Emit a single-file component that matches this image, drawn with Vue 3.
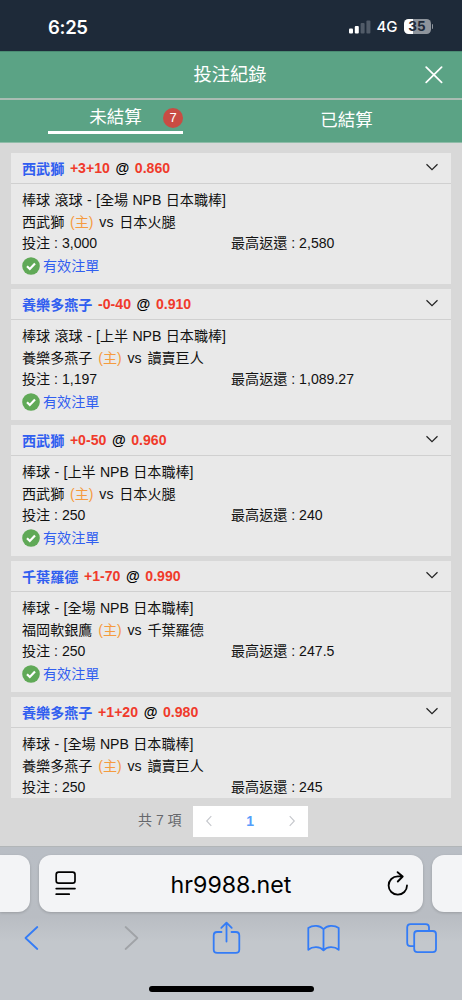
<script setup>
import { ref } from 'vue'

// tabs
const activeTab = ref('open')
const total = 7

// bets
const bets = [
  { pick: '西武獅', line: '+3+10', odds: '0.860', type: '棒球 滾球', scope: '全場', home: '西武獅', away: '日本火腿', stake: '3,000', payout: '2,580', status: '有效注單' },
  { pick: '養樂多燕子', line: '-0-40', odds: '0.910', type: '棒球 滾球', scope: '上半', home: '養樂多燕子', away: '讀賣巨人', stake: '1,197', payout: '1,089.27', status: '有效注單' },
  { pick: '西武獅', line: '+0-50', odds: '0.960', type: '棒球', scope: '上半', home: '西武獅', away: '日本火腿', stake: '250', payout: '240', status: '有效注單' },
  { pick: '千葉羅德', line: '+1-70', odds: '0.990', type: '棒球', scope: '全場', home: '福岡軟銀鷹', away: '千葉羅德', stake: '250', payout: '247.5', status: '有效注單' },
  { pick: '養樂多燕子', line: '+1+20', odds: '0.980', type: '棒球', scope: '全場', home: '養樂多燕子', away: '讀賣巨人', stake: '250', payout: '245' },
]
</script>

<template>
  <div class="phone">
    <!-- status bar -->
    <div class="status">
      <span class="clock">6:25</span>
      <div class="status-right">
        <svg class="signal" width="22" height="14" viewBox="0 0 22 14">
          <rect x="0" y="8.5" width="4" height="5" rx="1" fill="#fff" />
          <rect x="5.8" y="6" width="4" height="7.5" rx="1" fill="#fff" />
          <rect x="11.6" y="3" width="4" height="10.5" rx="1" fill="#515b68" />
          <rect x="17.4" y="0.5" width="4" height="13" rx="1" fill="#515b68" />
        </svg>
        <span class="network">4G</span>
        <div class="battery"><span>35</span></div>
        <i class="battery-tip"></i>
      </div>
    </div>

    <!-- header -->
    <div class="header">
      <span class="side"></span>
      <h1>投注紀錄</h1>
      <span class="side">
        <svg width="18" height="18" viewBox="0 0 18 18"><path d="M1.2 1.2 16.6 16.4M16.6 1.2 1.2 16.4" fill="none" stroke="#fff" stroke-width="1.7" stroke-linecap="round" /></svg>
      </span>
    </div>
    <div class="tabs">
      <div class="tab" :class="{ active: activeTab === 'open' }" @click="activeTab = 'open'">
        <span class="tab-inner">未結算<b class="badge">{{ total }}</b></span>
      </div>
      <div class="tab" :class="{ active: activeTab === 'settled' }" @click="activeTab = 'settled'">
        <span class="tab-inner">已結算</span>
      </div>
    </div>

    <!-- bet list -->
    <div class="list">
      <div class="card" v-for="(bet, i) in bets" :key="i">
        <div class="card-head">
          <span class="pick">{{ bet.pick }}</span>
          <span class="red">{{ bet.line }}</span>
          <span class="at">@</span>
          <span class="red">{{ bet.odds }}</span>
          <svg class="arrow" width="14" height="8" viewBox="0 0 14 8"><path d="M1.5 1.2 7 6.6 12.5 1.2" fill="none" stroke="#222" stroke-width="1.2" /></svg>
        </div>
        <div class="card-body">
          <p class="league">{{ bet.type }} - [{{ bet.scope }} NPB 日本職棒]</p>
          <p class="match"><span>{{ bet.home }}</span><span class="home">(主)</span><span>vs</span><span>{{ bet.away }}</span></p>
          <p class="money"><span>投注 : {{ bet.stake }}</span><span>最高返還 : {{ bet.payout }}</span></p>
          <p class="valid" v-if="bet.status">
            <svg width="18" height="18" viewBox="0 0 18 18">
              <circle cx="9" cy="9" r="8.8" fill="#60a957" />
              <path d="M5 9.3 7.8 12 13 6.5" fill="none" stroke="#fff" stroke-width="2.2" />
            </svg>
            {{ bet.status }}
          </p>
        </div>
      </div>
    </div>

    <!-- pagination -->
    <div class="pagination">
      <span class="total">共 {{ total }} 項</span>
      <div class="pager">
        <svg width="8" height="12" viewBox="0 0 8 12"><path d="M6.3 1.2 1.7 6l4.6 4.8" fill="none" stroke="#c5c7cc" stroke-width="1.1" /></svg>
        <b>1</b>
        <svg width="8" height="12" viewBox="0 0 8 12"><path d="M1.7 1.2 6.3 6l-4.6 4.8" fill="none" stroke="#c5c7cc" stroke-width="1.1" /></svg>
      </div>
    </div>

    <!-- browser bar -->
    <div class="browser">
      <div class="address-row">
        <div class="edge left"></div>
        <div class="address">
          <svg width="22" height="25" viewBox="0 0 22 25" fill="none" stroke="#000" stroke-width="1.7" stroke-linecap="round">
            <rect x="1.2" y="1.2" width="18.8" height="11" rx="2.4" />
            <path d="M1.2 17.6H20M1.2 23.2H14.2" />
          </svg>
          <span>hr9988.net</span>
          <svg width="22" height="26" viewBox="0 0 22 26" fill="none" stroke="#000" stroke-width="1.8" stroke-linecap="round" stroke-linejoin="round">
            <path d="M20 14.5A9.2 9.2 0 1 1 10.8 5.3H15.6M10.6 1.2 15.7 5.5 10.8 10.5" />
          </svg>
        </div>
        <div class="edge right"></div>
      </div>
      <div class="toolbar">
        <svg width="33" height="26" viewBox="0 0 33 26"><path d="M22.3 2 10.5 13 22.3 24" /></svg>
        <svg class="off" width="33" height="26" viewBox="0 0 33 26"><path d="M13.6 2 25.4 13 13.6 24" /></svg>
        <svg width="33" height="34" viewBox="-2.5 0 33 34"><path d="M9 11H4.6Q1.2 11 1.2 14.4V28.4Q1.2 31.8 4.6 31.8H23.4Q26.8 31.8 26.8 28.4V14.4Q26.8 11 23.4 11H19M14 20.5V1.8M8.8 6.8 14 1.6 19.2 6.8" /></svg>
        <svg width="33" height="28" viewBox="0 0 33 28"><path d="M16.5 5.2C13 .9 5.5.9 1.3 4V25.8C5.5 22.2 13 22.2 16.5 26.4 20 22.2 27.5 22.2 31.7 25.8V4C27.5.9 20 .9 16.5 5.2V26" /></svg>
        <svg width="33" height="31" viewBox="-1 0 33 31"><path d="M8 23.2H4.6Q1.2 23.2 1.2 19.8V4.6Q1.2 1.2 4.6 1.2H19.6Q23 1.2 23 4.6V8" /><rect x="8.2" y="8" width="21.8" height="21.2" rx="3.2" /></svg>
      </div>
      <div class="home-bar"></div>
    </div>
  </div>
</template>

<style>
body {
  margin: 0;
}
</style>

<style scoped>
.phone {
  width: 462px;
  height: 1000px;
  display: flex;
  flex-direction: column;
  overflow: hidden;
  background: #d8d8d8;
  font-family: "Liberation Sans", "Noto Sans CJK TC", sans-serif;
  color: #111;
}
.phone > div {
  box-sizing: border-box;
  flex-shrink: 0;
}

/* status bar */
.status {
  height: 51px;
  padding: 2px 29px 0 48px;
  display: flex;
  align-items: center;
  justify-content: space-between;
  background: #1e2a39;
  color: #fff;
}
.clock {
  font: 600 18.5px/24px Inter, sans-serif;
  letter-spacing: -0.3px;
}
.status-right {
  display: flex;
  align-items: center;
}
.network {
  margin: 0 6px 0 5px;
  font: 500 15px/20px Inter, sans-serif;
}
.battery {
  width: 27px;
  height: 15px;
  border-radius: 4.5px;
  background: linear-gradient(90deg, #fff 35%, #8e949c 35%);
  color: #1e2a39;
  font: 700 13.5px/15px Inter, sans-serif;
  text-align: center;
}
.battery-tip {
  width: 1.5px;
  height: 5px;
  margin-left: 1px;
  border-radius: 0 2px 2px 0;
  background: #8e949c;
}

/* header */
.header {
  height: 49px;
  padding: 0 20px 0 18px;
  border-top: 1px solid #4b8c73;
  border-bottom: 2px solid #a9bdb3;
  display: flex;
  align-items: center;
  justify-content: space-between;
  background: #5ba385;
  color: #fff;
}
.header h1 {
  margin: 0;
  font-size: 18.3px;
  font-weight: 400;
  line-height: 24px;
}
.side {
  width: 18px;
  height: 18px;
  margin-right: -1px;
}
.side svg {
  display: block;
}
.tabs {
  height: 43px;
  border-bottom: 1px solid #8fbca8;
  display: flex;
  background: #5ba385;
  color: #fff;
  font-size: 17.5px;
}
.tab {
  width: 50%;
  display: flex;
  justify-content: center;
}
.tab-inner {
  position: relative;
  width: 135px;
  height: 33.5px;
  line-height: 41px;
  text-align: center;
  box-sizing: border-box;
}
.tab.active .tab-inner {
  line-height: 34px;
  border-bottom: 3px solid #fff;
}
.badge {
  position: absolute;
  right: 0;
  top: 8px;
  width: 20px;
  height: 20px;
  border-radius: 50%;
  background: #c84c43;
  font: 400 13px/20px "Liberation Sans", sans-serif;
}

/* list */
.list {
  height: 655px;
  padding: 10px 11px 0;
  overflow: hidden;
}
.card {
  height: 131px;
  margin-bottom: 5px;
  background: #e9e9e9;
}
.card-head {
  height: 31px;
  padding: 0 12px 0 11px;
  box-sizing: border-box;
  border-bottom: 1px solid #d0d0d0;
  display: flex;
  align-items: center;
  gap: 5.6px;
  font-size: 14.1px;
  font-weight: 700;
}
.pick {
  margin-top: -1px;
  color: #315ff0;
}
.red {
  color: #f03a2b;
}
.at {
  color: #000;
}
.arrow {
  margin-left: auto;
  margin-bottom: 2px;
}
.card-body {
  padding: 5px 11px 0;
  font-size: 14.1px;
}
.card-body p {
  margin: 0;
  height: 21.7px;
  line-height: 22px;
  white-space: nowrap;
}
.card-body .league {
  word-spacing: 0.4px;
}
.match {
  display: flex;
  gap: 5.8px;
}
.home {
  color: #f59b3f;
}
.card-body .money {
  display: grid;
  grid-template-columns: 1fr 1fr;
}
.card-body .valid {
  height: 24px;
  display: flex;
  align-items: center;
  gap: 3px;
  color: #315ff0;
}

/* pagination */
.pagination {
  height: 48px;
  padding: 7.5px 0 0 138px;
  display: flex;
  gap: 11px;
  line-height: 29px;
}
.total {
  color: #66686c;
  font-size: 14px;
}
.pager {
  width: 115px;
  height: 31px;
  padding: 0 12px;
  box-sizing: border-box;
  display: flex;
  align-items: center;
  justify-content: space-between;
  background: #fff;
}
.pager b {
  color: #569dfb;
  font-size: 14px;
}

/* browser bar */
.browser {
  height: 154px;
  border-top: 1px solid #b2b6b8;
  background: linear-gradient(#b9bec5 0, #b9bdc3 70px, #c3c7cc 95px);
}
.address-row {
  display: flex;
  justify-content: space-between;
  padding-top: 8px;
}
.edge,
.address {
  height: 57px;
  background: #f3f4f6;
  box-shadow: 0 1px 3px rgba(0, 0, 0, 0.18);
}
.edge {
  width: 30px;
}
.left {
  border-radius: 0 12px 12px 0;
}
.right {
  border-radius: 12px 0 0 12px;
}
.address {
  width: 384px;
  padding: 0 14px 0 16px;
  box-sizing: border-box;
  border-radius: 12px;
  display: flex;
  align-items: center;
  justify-content: space-between;
  color: #000;
  font: 400 23.2px/30px Inter, sans-serif;
}
.address span {
  margin: 3px 2px 0 0;
}
.toolbar {
  height: 52px;
  padding: 0 24px 0 14.5px;
  display: flex;
  align-items: center;
  justify-content: space-between;
}
.toolbar svg {
  fill: none;
  stroke: #347cf6;
  stroke-width: 1.8;
  stroke-linecap: round;
  stroke-linejoin: round;
}
.toolbar .off {
  stroke: #a0a3a7;
}
.home-bar {
  width: 165px;
  height: 6px;
  margin: 22px auto 0;
  border-radius: 3px;
  background: #000;
}
</style>
